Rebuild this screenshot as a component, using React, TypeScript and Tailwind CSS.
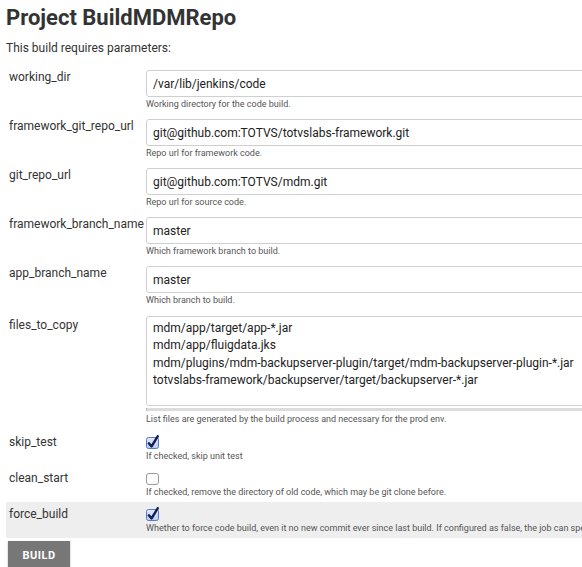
import React from "react";

const font = { fontFamily: "Roboto, 'Liberation Sans', sans-serif" };

function Checked() {
  return (
    <svg width="14" height="17" viewBox="0 0 14 17" className="block overflow-visible">
      <defs>
        <linearGradient id="cbg" x1="0" y1="0" x2="0" y2="1">
          <stop offset="0" stopColor="#e3ebfc" />
          <stop offset="1" stopColor="#b6cbf2" />
        </linearGradient>
      </defs>
      <rect x="0.5" y="3.5" width="12" height="11" rx="2" fill="url(#cbg)" stroke="#5a78c4" />
      <path d="M2.8 9.3 L5.6 12.4 L11.8 2.2" fill="none" stroke="#101c52" strokeWidth="2.4" strokeLinecap="round" strokeLinejoin="round" />
    </svg>
  );
}

function Unchecked() {
  return (
    <svg width="14" height="17" viewBox="0 0 14 17" className="block overflow-visible">
      <rect x="0.5" y="3.5" width="12" height="11" rx="2.5" fill="#fdfdfd" stroke="#9a9a9a" />
    </svg>
  );
}

function TextRow({ label, value, desc }: { label: string; value: string; desc: string }) {
  return (
    <div className="flex pt-[4px] pb-[5px]">
      <div className="w-[140px] shrink-0 pl-[3px] text-[12px] leading-[14px] text-[#333] whitespace-nowrap">{label}</div>
      <div className="flex-1 min-w-0">
        <div className="h-[27px] w-[460px] border border-[#cfcfcf] rounded-[3px] flex items-center px-[6px] text-[12px] text-[#222] whitespace-nowrap">
          {value}
        </div>
        <div className="mt-[1px] text-[9px] leading-[12px] text-[#555] whitespace-nowrap">{desc}</div>
      </div>
    </div>
  );
}

function CheckRow({ label, checked, desc, shaded }: { label: string; checked: boolean; desc: string; shaded?: boolean }) {
  return (
    <div className={"flex pt-[4px] pb-[4px] " + (shaded ? "bg-[#eeeeee]" : "")}>
      <div className="w-[140px] shrink-0 pl-[3px] pt-[2px] text-[12px] leading-[12px] text-[#333]">{label}</div>
      <div className="flex-1 min-w-0">
        <div className="h-[14px]">{checked ? <Checked /> : <Unchecked />}</div>
        <div className="mt-[2px] text-[9px] leading-[12px] text-[#555] whitespace-nowrap">{desc}</div>
      </div>
    </div>
  );
}

export default function App() {
  return (
    <div className="w-[582px] h-[567px] overflow-hidden bg-white" style={font}>
      <div className="pl-[6px] pt-[3px]">
        <h1 className="text-[22px] leading-[30px] font-bold text-[#333]">Project BuildMDMRepo</h1>
        <p className="mt-[8px] text-[12px] leading-[14px] text-[#333]">This build requires parameters:</p>
      </div>
      <div className="pl-[6px] mt-[11px]">
        <TextRow label="working_dir" value="/var/lib/jenkins/code" desc="Working directory for the code build." />
        <TextRow label="framework_git_repo_url" value="git@github.com:TOTVS/totvslabs-framework.git" desc="Repo url for framework code." />
        <TextRow label="git_repo_url" value="git@github.com:TOTVS/mdm.git" desc="Repo url for source code." />
        <TextRow label="framework_branch_name" value="master" desc="Which framework branch to build." />
        <TextRow label="app_branch_name" value="master" desc="Which branch to build." />
        <div className="flex pt-[5px] pb-[5px]">
          <div className="w-[140px] shrink-0 pl-[3px] pt-[2px] text-[12px] leading-[14px] text-[#333]">files_to_copy</div>
          <div className="flex-1 min-w-0">
            <div className="h-[90px] w-[460px] border border-[#cfcfcf] rounded-[3px] px-[6px] pt-[3px] text-[12px] leading-[17.3px] text-[#222] whitespace-nowrap">
              <div>mdm/app/target/app-*.jar</div>
              <div>mdm/app/fluigdata.jks</div>
              <div>mdm/plugins/mdm-backupserver-plugin/target/mdm-backupserver-plugin-*.jar</div>
              <div>totvslabs-framework/backupserver/target/backupserver-*.jar</div>
            </div>
            <div className="mt-[2px] h-[3px] w-[460px] bg-[#dcdcdc] border-l border-[#bbb]" />
            <div className="mt-[2px] text-[9px] leading-[12px] text-[#555] whitespace-nowrap">
              List files are generated by the build process and necessary for the prod env.
            </div>
          </div>
        </div>
        <CheckRow label="skip_test" checked desc="If checked, skip unit test" />
        <CheckRow label="clean_start" checked={false} desc="If checked, remove the directory of old code, which may be git clone before." />
        <CheckRow
          label="force_build"
          checked
          shaded
          desc="Whether to force code build, even it no new commit ever since last build. If configured as false, the job can speed up"
        />
      </div>
      <div className="pl-[8px] mt-[3px]">
        <button className="w-[62px] h-[30px] bg-[#777777] text-white text-[11px] font-bold tracking-[0.5px] shadow-[0_1px_2px_rgba(0,0,0,0.3)]">
          BUILD
        </button>
      </div>
    </div>
  );
}
